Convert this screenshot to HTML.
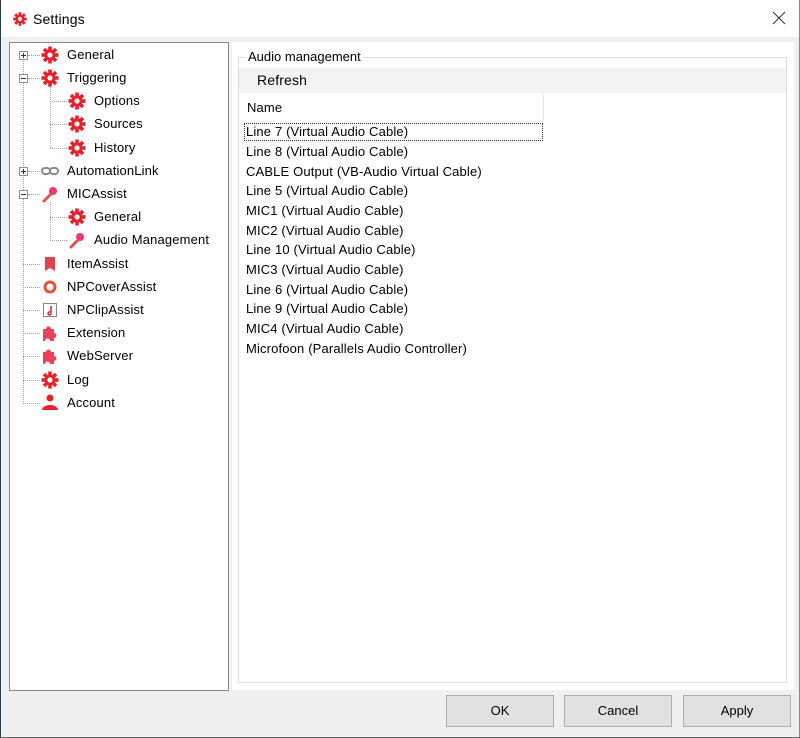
<!DOCTYPE html>
<html><head><meta charset="utf-8"><style>
*{margin:0;padding:0;box-sizing:border-box}
body{width:800px;height:738px;background:#f0f0f0;font-family:"Liberation Sans",sans-serif;font-size:13px;color:#000;position:relative;overflow:hidden}
.a{position:absolute}
.t{position:absolute;white-space:nowrap;line-height:14px;letter-spacing:0.15px}
.hd{position:absolute;border-top:1px dotted #a0a0a0;height:0}
.vd{position:absolute;border-left:1px dotted #a0a0a0;width:0}
.ex{position:absolute;width:9px;height:9px;border:1px solid #919191;background:#fff}
.ex:before{content:"";position:absolute;left:1px;top:3px;width:5px;height:1px;background:#333}
.ex.p:after{content:"";position:absolute;left:3px;top:1px;width:1px;height:5px;background:#333}
.btn{position:absolute;top:695px;width:108px;height:32px;background:#e1e1e1;border:1px solid #adadad;text-align:center;line-height:30px;font-size:13px}
</style></head><body>
<svg width="0" height="0" style="position:absolute"><defs>
<g id="gear"><g fill="#e8202a"><circle cx="0" cy="0" r="5.5"/>
<rect x="-1.8" y="-8.5" width="3.6" height="17"/><rect x="-8.5" y="-1.8" width="17" height="3.6"/>
<rect x="-1.8" y="-8.5" width="3.6" height="17" transform="rotate(45)"/><rect x="-1.8" y="-8.5" width="3.6" height="17" transform="rotate(-45)"/></g>
<circle r="2.6" fill="#fff"/></g>
<g id="mic"><path d="M-6 7 L1 0" stroke="#d9534f" stroke-width="3" stroke-linecap="round"/><circle cx="3" cy="-3" r="4" fill="#ec3b6a"/></g>
<g id="puz"><path d="M-7 -4h3a2.5 2.5 0 1 1 5 0h3v4a2.5 2.5 0 1 1 0 5v3h-4a2.5 2.5 0 1 0 -5 0h-2z" fill="#e8415a"/></g>
</defs></svg>
<div class="a" style="left:0;top:0;width:800px;height:37px;background:#fff"></div>
<div class="a" style="left:0;top:0;width:1px;height:738px;background:#2b3a4a"></div>
<div class="a" style="left:799px;top:0;width:1px;height:738px;background:#888"></div>
<div class="a" style="left:0;top:737px;width:800px;height:1px;background:#666"></div>
<svg class="a" style="left:12px;top:11px" width="16" height="16"><g transform="translate(8,8) scale(.8)"><use href="#gear"/></g></svg>
<div class="t" style="left:33px;top:12px;font-size:14px">Settings</div>
<svg class="a" style="left:772px;top:11px" width="14" height="14"><path d="M1 1L13 13M13 1L1 13" stroke="#333" stroke-width="1"/></svg>

<div class="a" style="left:9px;top:42px;width:220px;height:649px;background:#fff;border:1px solid #828790"></div>
<div class="vd" style="left:23px;top:59px;height:345px"></div>
<div class="vd" style="left:50px;top:86px;height:62px"></div>
<div class="vd" style="left:50px;top:202px;height:39px"></div>
<div class="hd" style="left:28px;top:55px;width:12px"></div><div class="ex p" style="left:19px;top:51px"></div>
<div class="hd" style="left:28px;top:78px;width:12px"></div><div class="ex" style="left:19px;top:74px"></div>
<div class="hd" style="left:50px;top:101px;width:17px"></div>
<div class="hd" style="left:50px;top:124px;width:17px"></div>
<div class="hd" style="left:50px;top:148px;width:17px"></div>
<div class="hd" style="left:28px;top:171px;width:12px"></div><div class="ex p" style="left:19px;top:167px"></div>
<div class="hd" style="left:28px;top:194px;width:12px"></div><div class="ex" style="left:19px;top:190px"></div>
<div class="hd" style="left:50px;top:217px;width:17px"></div>
<div class="hd" style="left:50px;top:240px;width:17px"></div>
<div class="hd" style="left:23px;top:264px;width:17px"></div>
<div class="hd" style="left:23px;top:287px;width:17px"></div>
<div class="hd" style="left:23px;top:310px;width:17px"></div>
<div class="hd" style="left:23px;top:333px;width:17px"></div>
<div class="hd" style="left:23px;top:356px;width:17px"></div>
<div class="hd" style="left:23px;top:380px;width:17px"></div>
<div class="hd" style="left:23px;top:403px;width:17px"></div>

<svg class="a" style="left:0;top:0" width="230" height="420">
<use href="#gear" x="50" y="55"/><use href="#gear" x="50" y="78"/>
<use href="#gear" x="77" y="101"/><use href="#gear" x="77" y="124"/><use href="#gear" x="77" y="148"/>
<g fill="none" stroke="#8a8a8a" stroke-width="2"><rect x="42" y="168" width="8" height="6" rx="3"/><rect x="50" y="168" width="8" height="6" rx="3"/></g>
<use href="#mic" x="50" y="194"/>
<use href="#gear" x="77" y="217"/>
<use href="#mic" x="77" y="240"/>
<path d="M45 257h10v14l-5-3-5 3z" fill="#e04050"/>
<circle cx="50" cy="287" r="5" fill="none" stroke="#e8503a" stroke-width="3"/>
<rect x="43.5" y="303.5" width="13" height="13" fill="#fff" stroke="#888"/><path d="M51 306v7M51 313a1.5 1.5 0 1 1 -1 -1" stroke="#d02030" fill="none" stroke-width="1.5"/>
<use href="#puz" x="50" y="333"/><use href="#puz" x="50" y="356"/>
<use href="#gear" x="50" y="380"/>
<circle cx="50" cy="398" r="3.5" fill="#e8202a"/><path d="M42 410a8 5 0 0 1 16 0z" fill="#e8202a"/>
</svg>
<div class="t" style="left:67px;top:48px">General</div>
<div class="t" style="left:67px;top:71px">Triggering</div>
<div class="t" style="left:94px;top:94px">Options</div>
<div class="t" style="left:94px;top:117px">Sources</div>
<div class="t" style="left:94px;top:141px">History</div>
<div class="t" style="left:67px;top:164px">AutomationLink</div>
<div class="t" style="left:67px;top:187px">MICAssist</div>
<div class="t" style="left:94px;top:210px">General</div>
<div class="t" style="left:94px;top:233px">Audio Management</div>
<div class="t" style="left:67px;top:257px">ItemAssist</div>
<div class="t" style="left:67px;top:280px">NPCoverAssist</div>
<div class="t" style="left:67px;top:303px">NPClipAssist</div>
<div class="t" style="left:67px;top:326px">Extension</div>
<div class="t" style="left:67px;top:349px">WebServer</div>
<div class="t" style="left:67px;top:373px">Log</div>
<div class="t" style="left:67px;top:396px">Account</div>

<div class="a" style="left:232px;top:42px;width:562px;height:648px;background:#fff"></div>
<div class="a" style="left:238px;top:57px;width:549px;height:626px;border:1px solid #dcdcdc"></div>
<div class="a" style="left:245px;top:50px;background:#fff;padding:0 3px;line-height:14px">Audio management</div>
<div class="a" style="left:239px;top:68px;width:547px;height:25px;background:#f3f3f3"></div>
<div class="t" style="left:257px;top:73px;font-size:14px">Refresh</div>
<div class="a" style="left:543px;top:94px;width:1px;height:26px;background:#e5e5e5"></div>
<div class="t" style="left:247px;top:101px">Name</div>
<div class="a" style="left:244px;top:123px;width:299px;height:18px;border:1px dotted #333"></div>
<div class="t" style="left:246px;top:125px">Line 7 (Virtual Audio Cable)</div>
<div class="t" style="left:246px;top:145px">Line 8 (Virtual Audio Cable)</div>
<div class="t" style="left:246px;top:165px">CABLE Output (VB-Audio Virtual Cable)</div>
<div class="t" style="left:246px;top:184px">Line 5 (Virtual Audio Cable)</div>
<div class="t" style="left:246px;top:204px">MIC1 (Virtual Audio Cable)</div>
<div class="t" style="left:246px;top:224px">MIC2 (Virtual Audio Cable)</div>
<div class="t" style="left:246px;top:243px">Line 10 (Virtual Audio Cable)</div>
<div class="t" style="left:246px;top:263px">MIC3 (Virtual Audio Cable)</div>
<div class="t" style="left:246px;top:283px">Line 6 (Virtual Audio Cable)</div>
<div class="t" style="left:246px;top:302px">Line 9 (Virtual Audio Cable)</div>
<div class="t" style="left:246px;top:322px">MIC4 (Virtual Audio Cable)</div>
<div class="t" style="left:246px;top:342px">Microfoon (Parallels Audio Controller)</div>

<div class="btn" style="left:446px">OK</div>
<div class="btn" style="left:564px">Cancel</div>
<div class="btn" style="left:683px">Apply</div>
</body></html>
